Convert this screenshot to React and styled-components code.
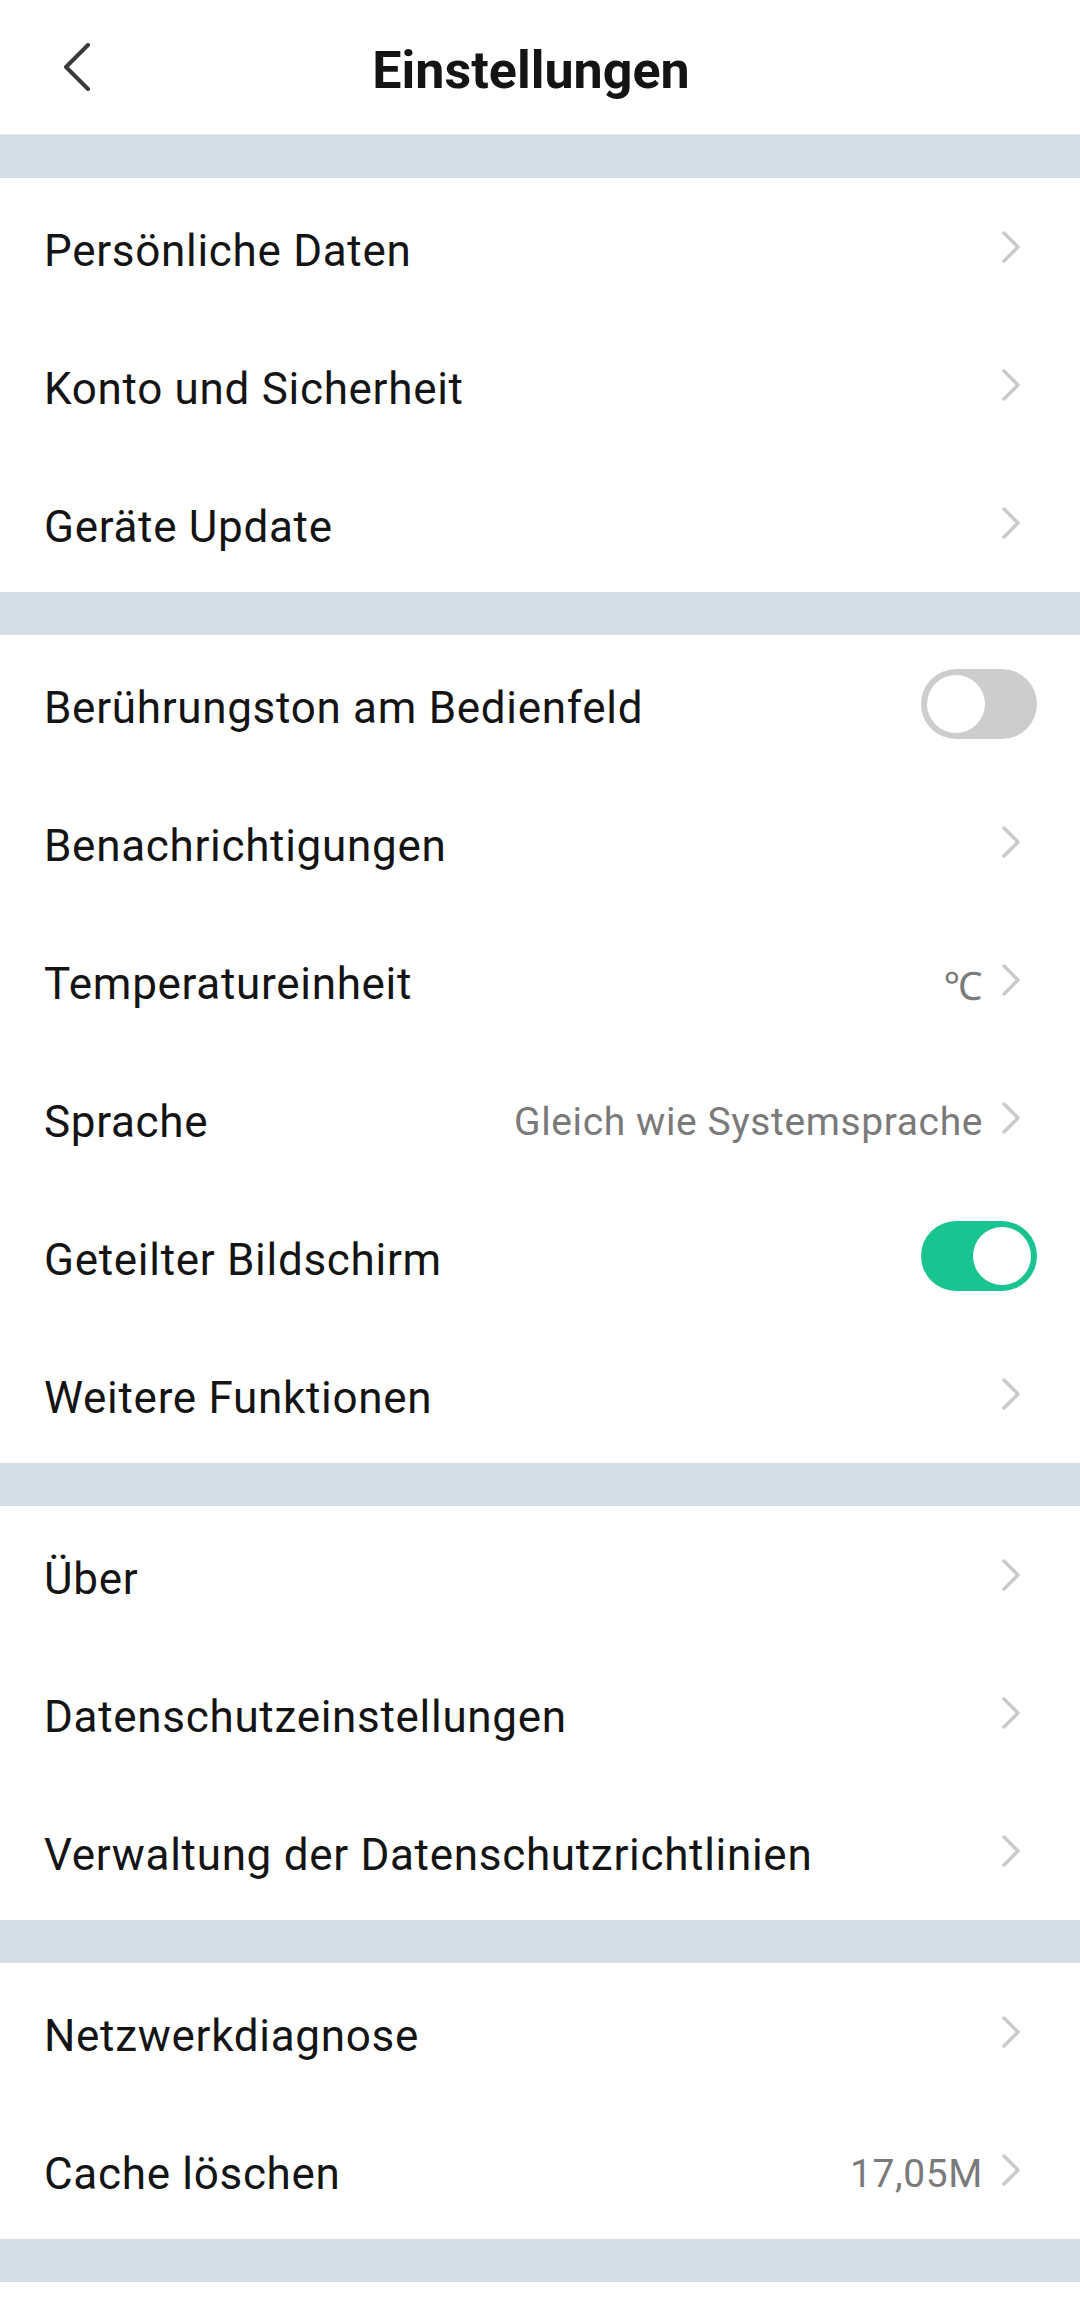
import React from "react";
import styled, { createGlobalStyle } from "styled-components";

const Global = createGlobalStyle`
  html, body { margin: 0; padding: 0; background: #ffffff; }
  body { font-family: Roboto, "Noto Sans", "Liberation Sans", sans-serif; -webkit-font-smoothing: antialiased; }
  * { box-sizing: border-box; }
`;

const Page = styled.div`
  width: 1080px;
  min-height: 2313px;
  background: #ffffff;
  display: flex;
  flex-direction: column;
`;

const Header = styled.header`
  height: 135px;
  display: grid;
  grid-template-columns: 140px 1fr 140px;
  align-items: center;
  background: #ffffff;
  border-bottom: 1px solid #e4e8ec;
`;

const BackButton = styled.button`
  border: none;
  background: none;
  padding: 0 0 0 62px;
  height: 100%;
  display: flex;
  align-items: center;
  cursor: pointer;
`;

const Title = styled.h1`
  margin: 0;
  padding-top: 6px;
  text-align: center;
  font-family: Roboto, "Liberation Sans", sans-serif;
  font-weight: 700;
  font-size: 52px;
  color: #141414;
  letter-spacing: 0;
  transform: translateX(-9px);
`;

const Gap = styled.div`
  height: ${(p) => p.$h || 43}px;
  background: #d5dee6;
`;

const Section = styled.section`
  display: flex;
  flex-direction: column;
  background: #ffffff;
`;

const Row = styled.div`
  height: 138px;
  display: flex;
  align-items: center;
  padding: 8px 43px 0 44px;
`;

const Label = styled.span`
  flex: 1;
  font-size: 44px;
  letter-spacing: 0.7px;
  color: #141414;
  white-space: nowrap;
`;

const Value = styled.span`
  font-size: 39px;
  letter-spacing: 0.6px;
  color: #7a7a7a;
  margin-right: 18px;
  white-space: nowrap;
`;

const ChevronBox = styled.span`
  display: flex;
  width: 20px;
  justify-content: center;
  margin-right: 16px;
  margin-top: -8px;
`;

const Toggle = styled.span`
  position: relative;
  width: 116px;
  height: 70px;
  border-radius: 35px;
  background: ${(p) => (p.$on ? "#19c490" : "#cdcdcd")};
  margin-top: -8px;
  margin-right: 0;
  flex-shrink: 0;
`;

const Knob = styled.span`
  position: absolute;
  top: 6px;
  left: ${(p) => (p.$on ? "52px" : "6px")};
  width: 58px;
  height: 58px;
  border-radius: 50%;
  background: #ffffff;
`;

const Chevron = () => (
  <ChevronBox>
    <svg width="20" height="34" viewBox="0 0 20 34">
      <polyline
        points="3,3 17,17 3,31"
        fill="none"
        stroke="#cacaca"
        strokeWidth="3.5"
        strokeLinecap="round"
        strokeLinejoin="round"
      />
    </svg>
  </ChevronBox>
);

const BackIcon = () => (
  <svg width="30" height="48" viewBox="0 0 30 48">
    <polyline
      points="26,2 4,24 26,46"
      fill="none"
      stroke="#3a3a3a"
      strokeWidth="4"
      strokeLinecap="round"
      strokeLinejoin="round"
    />
  </svg>
);

const SettingRow = ({ label, value, toggle }) => (
  <Row>
    <Label>{label}</Label>
    {toggle !== undefined ? (
      <Toggle $on={toggle}>
        <Knob $on={toggle} />
      </Toggle>
    ) : (
      <>
        {value && <Value>{value}</Value>}
        <Chevron />
      </>
    )}
  </Row>
);

const sections = [
  [
    { label: "Persönliche Daten" },
    { label: "Konto und Sicherheit" },
    { label: "Geräte Update" },
  ],
  [
    { label: "Berührungston am Bedienfeld", toggle: false },
    { label: "Benachrichtigungen" },
    { label: "Temperatureinheit", value: "℃" },
    { label: "Sprache", value: "Gleich wie Systemsprache" },
    { label: "Geteilter Bildschirm", toggle: true },
    { label: "Weitere Funktionen" },
  ],
  [
    { label: "Über" },
    { label: "Datenschutzeinstellungen" },
    { label: "Verwaltung der Datenschutzrichtlinien" },
  ],
  [
    { label: "Netzwerkdiagnose" },
    { label: "Cache löschen", value: "17,05M" },
  ],
];

export default function App() {
  return (
    <Page>
      <Global />
      <Header>
        <BackButton aria-label="Zurück">
          <BackIcon />
        </BackButton>
        <Title>Einstellungen</Title>
        <span />
      </Header>
      {sections.map((rows, i) => (
        <React.Fragment key={i}>
          <Gap />
          <Section>
            {rows.map((r) => (
              <SettingRow key={r.label} {...r} />
            ))}
          </Section>
        </React.Fragment>
      ))}
      <Gap />
    </Page>
  );
}
